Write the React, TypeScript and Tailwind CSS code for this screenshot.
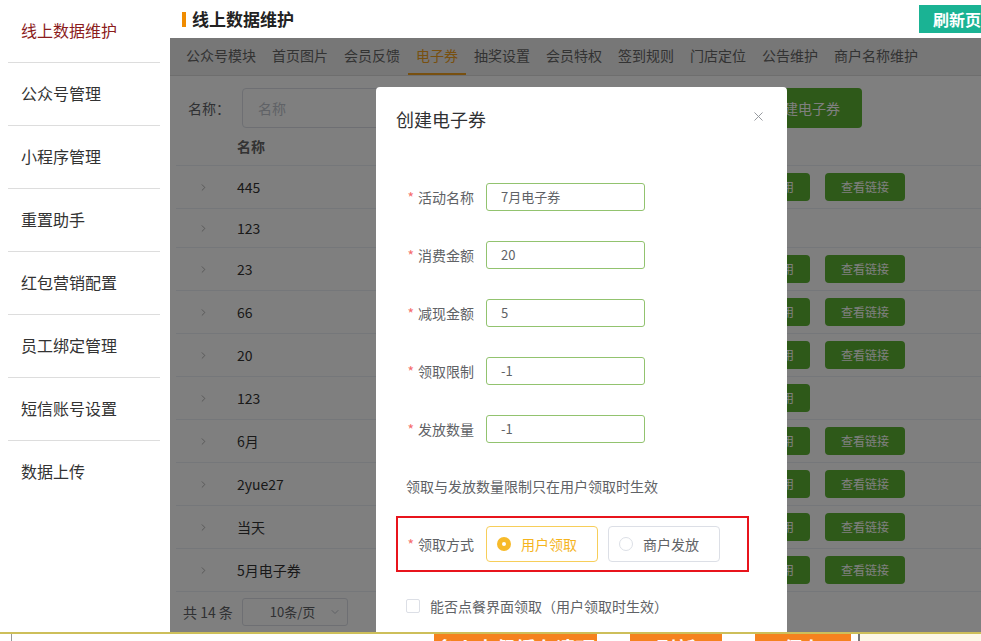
import { ChevronDown, ChevronRight, X } from 'lucide-react'

const menu = ['线上数据维护', '公众号管理', '小程序管理', '重置助手', '红包营销配置', '员工绑定管理', '短信账号设置', '数据上传']

const tabs = ['公众号模块', '首页图片', '会员反馈', '电子券', '抽奖设置', '会员特权', '签到规则', '门店定位', '公告维护', '商户名称维护']

const rows = [
  { name: '445', toggle: true, link: true },
  { name: '123', toggle: false, link: false },
  { name: '23', toggle: true, link: true },
  { name: '66', toggle: true, link: true },
  { name: '20', toggle: true, link: true },
  { name: '123', toggle: true, link: false },
  { name: '6月', toggle: true, link: true },
  { name: '2yue27', toggle: true, link: true },
  { name: '当天', toggle: true, link: true },
  { name: '5月电子券', toggle: true, link: true },
]

const fields = [
  { label: '活动名称', value: '7月电子券' },
  { label: '消费金额', value: '20' },
  { label: '减现金额', value: '5' },
  { label: '领取限制', value: '-1' },
  { label: '发放数量', value: '-1' },
]

function Label({ text, width }: { text: string; width: string }) {
  return (
    <label className={`${width} shrink-0 pr-[12px] text-right text-[14px] text-[#606266]`}>
      <span className="text-[#f56c6c] mr-[4px]">*</span>
      {text}
    </label>
  )
}

export default function App() {
  return (
    <div className="w-[981px] h-[641px] overflow-hidden bg-white font-['Noto_Sans_CJK_SC',sans-serif] text-[#333]">
      <div className="flex h-[632px]">
        {/* sidebar */}
        <aside className="w-[170px] shrink-0 pl-[8px] pr-[10px]">
          {menu.map((m, i) => (
            <div
              key={m}
              className={`h-[63px] pl-[13px] pb-[3px] flex items-center text-[16px] ${i < menu.length - 1 ? 'border-b border-[#ddd]' : ''} ${i === 0 ? 'text-[#8b1c1c]' : 'text-[#333]'}`}
            >
              {m}
            </div>
          ))}
        </aside>

        <div className="flex-1 min-w-0 flex flex-col">
          <header className="h-[38px] shrink-0 flex items-center pl-[12px]">
            <span className="w-[4px] h-[15px] bg-[#f08c00]" />
            <h1 className="ml-[6px] text-[17px] font-bold text-[#222]">线上数据维护</h1>
            <button className="ml-auto mr-[-30px] shrink-0 h-[28px] px-[14px] bg-[#1ab394] text-white font-bold text-[16px] whitespace-nowrap">
              刷新页面
            </button>
          </header>

          {/* framed page */}
          <div className="relative flex-1 overflow-hidden">
            <nav className="h-[38px] bg-[#eeeeee] border-b border-[#dddddd] flex pl-[8px]">
              {tabs.map(t => (
                <div
                  key={t}
                  className={`px-[8px] flex items-center text-[14px] border-b-2 ${t === '电子券' ? 'text-[#f0a020] border-[#f0a020]' : 'text-[#666] border-transparent'}`}
                >
                  {t}
                </div>
              ))}
            </nav>

            <div className="flex items-center h-[40px] mt-[12px] pl-[18px]">
              <span className="w-[54px] text-[14px] text-[#606266]">名称：</span>
              <div className="w-[200px] h-[40px] border border-[#dcdfe6] rounded-[4px] pl-[15px] flex items-center text-[14px] text-[#c0c4cc]">
                名称
              </div>
              <button className="ml-[306px] h-[40px] px-[22px] rounded-[4px] bg-[#5cb232] text-white text-[14px]">
                创建电子券
              </button>
            </div>

            <div className="ml-[6px]">
              <div className="h-[38px] flex items-center border-b border-[#ebeef5]">
                <div className="w-[61px]" />
                <div className="text-[14px] font-bold text-[#666]">名称</div>
              </div>
              {rows.map((r, i) => (
                <div
                  key={i}
                  className={`${r.toggle || r.link ? 'h-[43px]' : 'h-[39px]'} flex items-center border-b border-[#ebeef5] text-[14px] text-[#333]`}
                >
                  <div className="w-[61px] pl-[22px] text-[#aaa]">
                    <ChevronRight size={11} strokeWidth={2} />
                  </div>
                  <div className="w-[517px]">{r.name}</div>
                  <div className="flex gap-[15px]">
                    {r.toggle && (
                      <span className="h-[28px] px-[16px] rounded-[4px] bg-[#5cb232] text-white text-[12px] flex items-center">停用</span>
                    )}
                    {r.link && (
                      <span className="h-[28px] px-[16px] rounded-[4px] bg-[#5cb232] text-white text-[12px] flex items-center">查看链接</span>
                    )}
                  </div>
                </div>
              ))}
            </div>

            <div className="h-[40px] flex items-center pl-[13px] text-[14px] text-[#606266]">
              <span>共 14 条</span>
              <div className="relative ml-[9px] w-[106px] h-[28px] border border-[#dcdfe6] rounded-[3px] flex items-center pl-[27px] text-[13px]">
                10条/页
                <ChevronDown size={12} className="absolute right-[6px] text-[#c0c4cc]" />
              </div>
            </div>

            {/* mask */}
            <div className="absolute inset-0 bg-black/50" />

            {/* dialog */}
            <div className="absolute left-[206px] top-[49px] w-[411px] h-[620px] bg-white rounded-[4px]">
              <div className="pt-[20px] px-[20px] pb-[10px]">
                <h2 className="text-[18px] leading-[24px] text-[#303133]">创建电子券</h2>
              </div>
              <X size={15} strokeWidth={1.5} className="absolute right-[21px] top-[22px] text-[#909399]" />

              <div className="pt-[42px] flex flex-col gap-[30px]">
                {fields.map(f => (
                  <div key={f.label} className="flex items-center h-[28px]">
                    <Label text={f.label} width="w-[110px]" />
                    <div className="w-[159px] h-[28px] border border-[#92c36f] rounded-[3px] pl-[14px] flex items-center text-[13px] text-[#606266]">
                      {f.value}
                    </div>
                  </div>
                ))}
              </div>

              <p className="mt-[33px] pl-[30px] text-[14px] leading-[20px] text-[#606266]">领取与发放数量限制只在用户领取时生效</p>

              <div className="mt-[20px] ml-[20px] w-[353px] h-[56px] border-2 border-[#e8141c] flex items-center">
                <Label text="领取方式" width="w-[88px]" />
                <div className="flex gap-[10px]">
                  <div className="w-[112px] h-[36px] border border-[#f7ce5a] rounded-[4px] pl-[10px] flex items-center gap-[10px] text-[14px] text-[#f5b41e]">
                    <span className="w-[14px] h-[14px] rounded-full bg-[#f7ba2a] flex items-center justify-center">
                      <span className="w-[4px] h-[4px] rounded-full bg-white" />
                    </span>
                    用户领取
                  </div>
                  <div className="w-[112px] h-[36px] border border-[#dcdfe6] rounded-[4px] pl-[10px] flex items-center gap-[10px] text-[14px] text-[#606266]">
                    <span className="w-[14px] h-[14px] rounded-full border border-[#dcdfe6]" />
                    商户发放
                  </div>
                </div>
              </div>

              <div className="mt-[24px] pl-[30px] flex items-center gap-[10px] h-[20px]">
                <span className="w-[14px] h-[14px] border border-[#dcdfe6] rounded-[2px]" />
                <span className="text-[14px] text-[#606266]">能否点餐界面领取（用户领取时生效）</span>
              </div>
            </div>
          </div>
        </div>
      </div>

      {/* bottom toolbar, mostly below the fold */}
      <footer className="h-[9px] border-t-2 border-[#cdbf5a] bg-white flex overflow-hidden">
        <span className="ml-[11px] w-[1px] h-full bg-[#999]" />
        <button className="ml-[422px] w-[163px] h-[30px] shrink-0 bg-[#f5821f] text-white text-[20px] font-bold leading-none pt-0">
          多人点餐缓存清理
        </button>
        <button className="ml-[33px] w-[92px] h-[30px] shrink-0 bg-[#f5821f] text-white text-[20px] font-bold leading-none pt-0">
          刷新
        </button>
        <button className="ml-[33px] w-[96px] h-[30px] shrink-0 bg-[#f5821f] text-white text-[20px] font-bold leading-none pt-0">
          保存
        </button>
        <span className="ml-[7px] w-[2px] h-full bg-[#777]" />
        <div className="flex-1 bg-[#fdf8e8]" />
      </footer>
    </div>
  )
}
